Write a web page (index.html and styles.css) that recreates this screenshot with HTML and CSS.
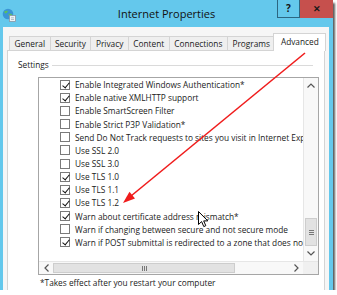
FILE: index.html
```html
<!DOCTYPE html>
<html lang="en">
<head>
  <meta charset="UTF-8" />
  <title>Internet Properties</title>
  <link rel="stylesheet" href="styles.css">
</head>
<body>
  <div class="window">
    <!-- Title bar -->
    <div class="titlebar">
      <svg class="app-icon" width="14" height="14" viewBox="0 0 14 14">
        <circle cx="6" cy="6" r="5.3" fill="#3b95d6"/>
        <path d="M2 4 Q4 2 6 3 Q5 5 3.5 5.5 Z M6.5 6 Q9 5 10.5 7 Q8.5 9 7 8.5 Z" fill="#5cc25a"/>
        <rect x="7.5" y="7.5" width="6" height="6" fill="#eef2f5" stroke="#8795a3" stroke-width="0.8"/>
        <line x1="9" y1="9.8" x2="12" y2="9.8" stroke="#9aa8b5" stroke-width="0.7"/>
        <line x1="9" y1="11.5" x2="12" y2="11.5" stroke="#9aa8b5" stroke-width="0.7"/>
      </svg>
      <div class="title">Internet Properties</div>
      <div class="caption-buttons">
        <div class="btn-help">?</div>
        <div class="btn-close">&#x2715;</div>
      </div>
    </div>

    <!-- Dialog body -->
    <div class="client">
      <div class="tabs">
        <div class="tab">General</div>
        <div class="tab">Security</div>
        <div class="tab">Privacy</div>
        <div class="tab">Content</div>
        <div class="tab">Connections</div>
        <div class="tab">Programs</div>
        <div class="tab active">Advanced</div>
      </div>
      <div class="tab-page">
        <div class="group-title"><span>Settings</span></div>
        <div class="listbox">
          <div class="list-main">
            <div class="items">
              <div class="item"><span class="check on"></span>Enable Integrated Windows Authentication*</div>
              <div class="item"><span class="check on"></span>Enable native XMLHTTP support</div>
              <div class="item"><span class="check"></span>Enable SmartScreen Filter</div>
              <div class="item"><span class="check"></span>Enable Strict P3P Validation*</div>
              <div class="item"><span class="check"></span>Send Do Not Track requests to sites you visit in Internet Explorer*</div>
              <div class="item"><span class="check"></span>Use SSL 2.0</div>
              <div class="item"><span class="check"></span>Use SSL 3.0</div>
              <div class="item"><span class="check on"></span>Use TLS 1.0</div>
              <div class="item"><span class="check on"></span>Use TLS 1.1</div>
              <div class="item"><span class="check on"></span>Use TLS 1.2</div>
              <div class="item"><span class="check on"></span>Warn about certificate address mismatch*</div>
              <div class="item"><span class="check"></span>Warn if changing between secure and not secure mode</div>
              <div class="item"><span class="check on"></span>Warn if POST submittal is redirected to a zone that does not permit posts</div>
            </div>
            <div class="vscroll">
              <div class="sb-btn">
                <svg width="8" height="5" viewBox="0 0 8 5"><polyline points="0.5,4.5 4,1 7.5,4.5" fill="none" stroke="#555" stroke-width="1.2"/></svg>
              </div>
              <div class="sb-track"></div>
              <div class="sb-thumb-v"><span class="grip-v"></span></div>
              <div class="sb-btn">
                <svg width="8" height="5" viewBox="0 0 8 5"><polyline points="0.5,0.5 4,4 7.5,0.5" fill="none" stroke="#555" stroke-width="1.2"/></svg>
              </div>
            </div>
          </div>
          <div class="hscroll">
            <div class="sb-btn-h">
              <svg width="5" height="8" viewBox="0 0 5 8"><polyline points="4.5,0.5 1,4 4.5,7.5" fill="none" stroke="#555" stroke-width="1.2"/></svg>
            </div>
            <div class="sb-thumb-h"><span class="grip-h"></span></div>
            <div class="sb-track-h"></div>
            <div class="sb-btn-h">
              <svg width="5" height="8" viewBox="0 0 5 8"><polyline points="0.5,0.5 4,4 0.5,7.5" fill="none" stroke="#555" stroke-width="1.2"/></svg>
            </div>
            <div class="sb-corner"></div>
          </div>
        </div>
        <div class="note">*Takes effect after you restart your computer</div>
      </div>
    </div>

    <!-- Annotation arrow drawn over the dialog -->
    <svg class="arrow" width="333" height="290" viewBox="0 0 333 290">
      <line x1="305" y1="53" x2="131" y2="196" stroke="#f01c1c" stroke-width="1.6"/>
      <polygon points="123,203 135,198.5 129.5,191.8" fill="#f01c1c"/>
    </svg>

    <!-- Mouse pointer -->
    <svg class="cursor" width="11" height="17" viewBox="0 0 11 17">
      <path d="M0.5 0.5 L0.5 13.5 L3.6 10.6 L5.8 15.6 L7.8 14.7 L5.7 9.9 L9.8 9.9 Z" fill="#fff" stroke="#000" stroke-width="1" stroke-linejoin="round"/>
    </svg>
  </div>
</body>
</html>
```

FILE: styles.css
```css
* {
  box-sizing: border-box;
}
body {
  margin: 0;
  background: #fff;
  font-family: "Open Sans", "Noto Sans", sans-serif;
  color: #1a1a1a;
}
/* Outer window with blue frame and drop shadow */
.window {
  position: relative;
  width: 333px;
  height: 290px;
  background: #64c8ec;
  box-shadow: 2px 3px 2px rgba(0, 0, 0, 0.65);
  display: flex;
  flex-direction: column;
  overflow: hidden;
}
/* Title bar */
.titlebar {
  height: 27px;
  display: grid;
  grid-template-columns: 1fr auto 1fr;
  align-items: start;
}
.app-icon {
  margin: 8px 0 0 2px;
}
.title {
  font-size: 11px;
  line-height: 14px;
  margin-top: 7px;
  color: #111;
}
.caption-buttons {
  justify-self: end;
  display: flex;
}
.btn-help {
  width: 23px;
  height: 18px;
  border: 1px solid #2c6682;
  border-top: none;
  font-size: 10px;
  font-weight: bold;
  text-align: center;
  line-height: 16px;
  color: #111;
}
.btn-close {
  width: 33px;
  height: 18px;
  background: #c6504d;
  font-size: 9px;
  font-weight: bold;
  text-align: center;
  line-height: 17px;
  color: #1a1a1a;
}
/* Client area of the dialog */
.client {
  flex: 1;
  margin: 0 4px 0 3px;
  background: #f6f6f6;
  padding: 6px 4px 0 4px;
  display: flex;
  flex-direction: column;
}
.tabs {
  display: flex;
  align-items: flex-end;
  height: 17px;
  padding-left: 2px;
}
.tab {
  height: 14px;
  padding: 0 4.5px;
  margin-right: -1px;
  border: 1px solid #d4d4d4;
  border-bottom: none;
  background: #efefef;
  font-size: 8.3px;
  line-height: 13px;
  white-space: nowrap;
}
.tab.active {
  position: relative;
  margin: 0 -2px -1px -1px;
  padding: 0 6.5px;
  height: 18px;
  background: #fff;
  line-height: 15px;
  z-index: 1;
}
.tab-page {
  flex: 1;
  background: #fff;
  border: 1px solid #d4d4d4;
  border-bottom: none;
  padding: 8px 11px 0 10px;
}
/* Group box header */
.group-title {
  display: flex;
  align-items: center;
  font-size: 8.3px;
  line-height: 12px;
}
.group-title::after {
  content: "";
  flex: 1;
  margin-left: 3px;
  border-top: 1px solid #dadada;
}
/* List of check options */
.listbox {
  margin: 6px 0 0 20px;
  width: 281px;
  border: 1px solid #a6a6a6;
}
.list-main {
  display: flex;
  height: 183px;
}
.items {
  flex: 1;
  overflow: hidden;
}
.item {
  height: 13.17px;
  display: flex;
  align-items: center;
  padding-left: 21px;
  font-size: 8.3px;
  white-space: nowrap;
}
.check {
  flex: none;
  position: relative;
  width: 10px;
  height: 10px;
  border: 1px solid #7a7a7a;
  background: #fff;
  margin-right: 5px;
}
.check.on::after {
  content: "";
  position: absolute;
  left: 2.5px;
  top: 0px;
  width: 3px;
  height: 6px;
  border-right: 1.7px solid #111;
  border-bottom: 1.7px solid #111;
  transform: rotate(40deg);
}
/* Vertical scroll bar */
.vscroll {
  width: 15px;
  display: flex;
  flex-direction: column;
  background: #f8f8f8;
  border-left: 1px solid #e6e6e6;
}
.sb-btn {
  height: 15px;
  display: flex;
  align-items: center;
  justify-content: center;
}
.sb-track {
  flex: 1;
}
.sb-thumb-v {
  height: 28px;
  margin: 0 1px;
  background: #e2e2e2;
  border: 1px solid #cdcdcd;
  display: flex;
  align-items: center;
  justify-content: center;
}
.grip-v {
  width: 5px;
  height: 5px;
  border-top: 1px solid #777;
  border-bottom: 1px solid #777;
  position: relative;
}
.grip-v::after {
  content: "";
  position: absolute;
  left: 0;
  right: 0;
  top: 1px;
  border-top: 1px solid #777;
}
/* Horizontal scroll bar */
.hscroll {
  height: 13px;
  display: flex;
  border-top: 1px solid #e6e6e6;
  background: #f8f8f8;
}
.sb-btn-h {
  width: 14px;
  display: flex;
  align-items: center;
  justify-content: center;
}
.sb-thumb-h {
  width: 182px;
  margin: 1px 0;
  background: #e2e2e2;
  border: 1px solid #cdcdcd;
  display: flex;
  align-items: center;
  justify-content: center;
}
.grip-h {
  width: 5px;
  height: 5px;
  border-left: 1px solid #777;
  border-right: 1px solid #777;
  position: relative;
}
.grip-h::after {
  content: "";
  position: absolute;
  top: 0;
  bottom: 0;
  left: 1px;
  border-left: 1px solid #777;
}
.sb-track-h {
  flex: 1;
}
.sb-corner {
  width: 15px;
  background: #f0f0f0;
}
.note {
  margin: 2px 0 0 22px;
  font-size: 8.3px;
  line-height: 12px;
}
/* Overlays: annotation arrow and pointer */
.arrow {
  position: absolute;
  left: 0;
  top: 0;
  pointer-events: none;
}
.cursor {
  position: absolute;
  left: 198px;
  top: 211px;
}
```
